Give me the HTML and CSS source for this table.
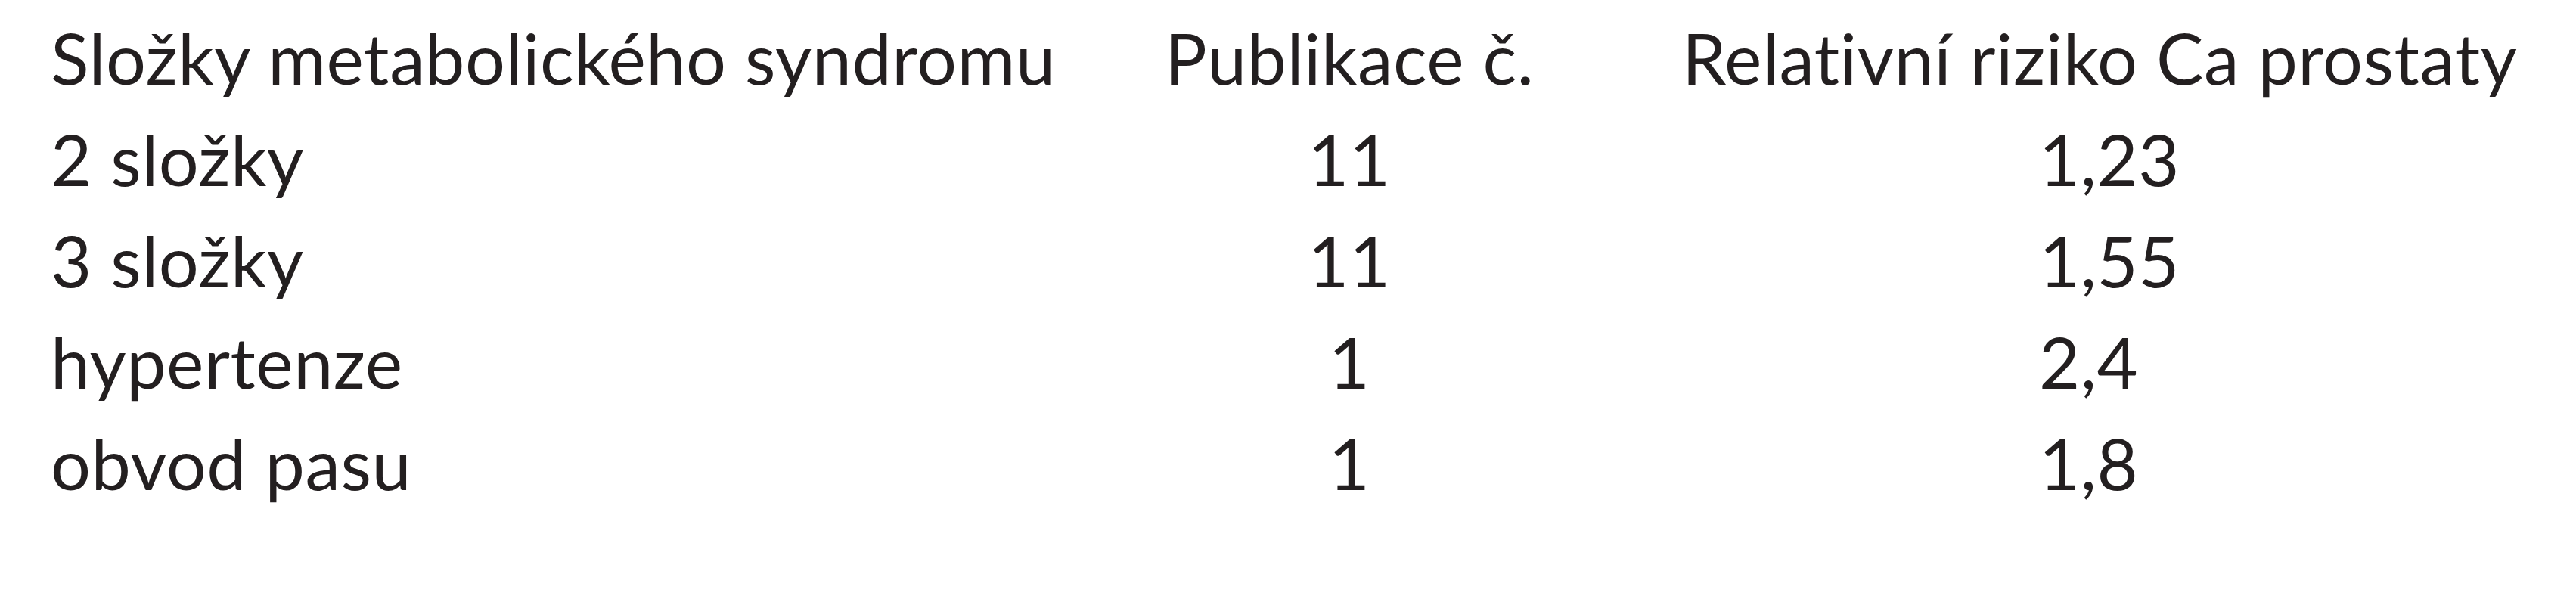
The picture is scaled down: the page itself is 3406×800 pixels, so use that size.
FILE: index.html
```html
<!DOCTYPE html>
<html lang="cs">
<head>
<meta charset="utf-8">
<title>Složky metabolického syndromu</title>
<link rel="stylesheet" href="styles.css">
</head>
<body>
<div class="table">
  <div class="row head">
    <div class="c1">Složky metabolického syndromu</div>
    <div class="c2">Publikace č.</div>
    <div class="c3">Relativní riziko Ca prostaty</div>
  </div>
  <div class="row">
    <div class="c1">2 složky</div>
    <div class="c2">11</div>
    <div class="c3 val">1,23</div>
  </div>
  <div class="row">
    <div class="c1">3 složky</div>
    <div class="c2">11</div>
    <div class="c3 val">1,55</div>
  </div>
  <div class="row">
    <div class="c1">hypertenze</div>
    <div class="c2">1</div>
    <div class="c3 val">2,4</div>
  </div>
  <div class="row">
    <div class="c1">obvod pasu</div>
    <div class="c2">1</div>
    <div class="c3 val">1,8</div>
  </div>
</div>
</body>
</html>
```

FILE: styles.css
```css
html, body {
  margin: 0;
  padding: 0;
  background: #ffffff;
}
body {
  padding: 9px 0 0 67px;
  font-family: "Lato", "Open Sans", "Liberation Sans", sans-serif;
  color: #231f20;
}
.table {
  display: flex;
  flex-direction: column;
}
.row {
  display: grid;
  grid-template-columns: 1320px 794px 1fr;
  font-size: 93.5px;
  line-height: 134px;
  letter-spacing: 0.5px;
  white-space: nowrap;
}
.c2 {
  text-align: center;
}
.c3 {
  padding-left: 43px;
}
.c3.val {
  padding-left: 515px;
}
```
